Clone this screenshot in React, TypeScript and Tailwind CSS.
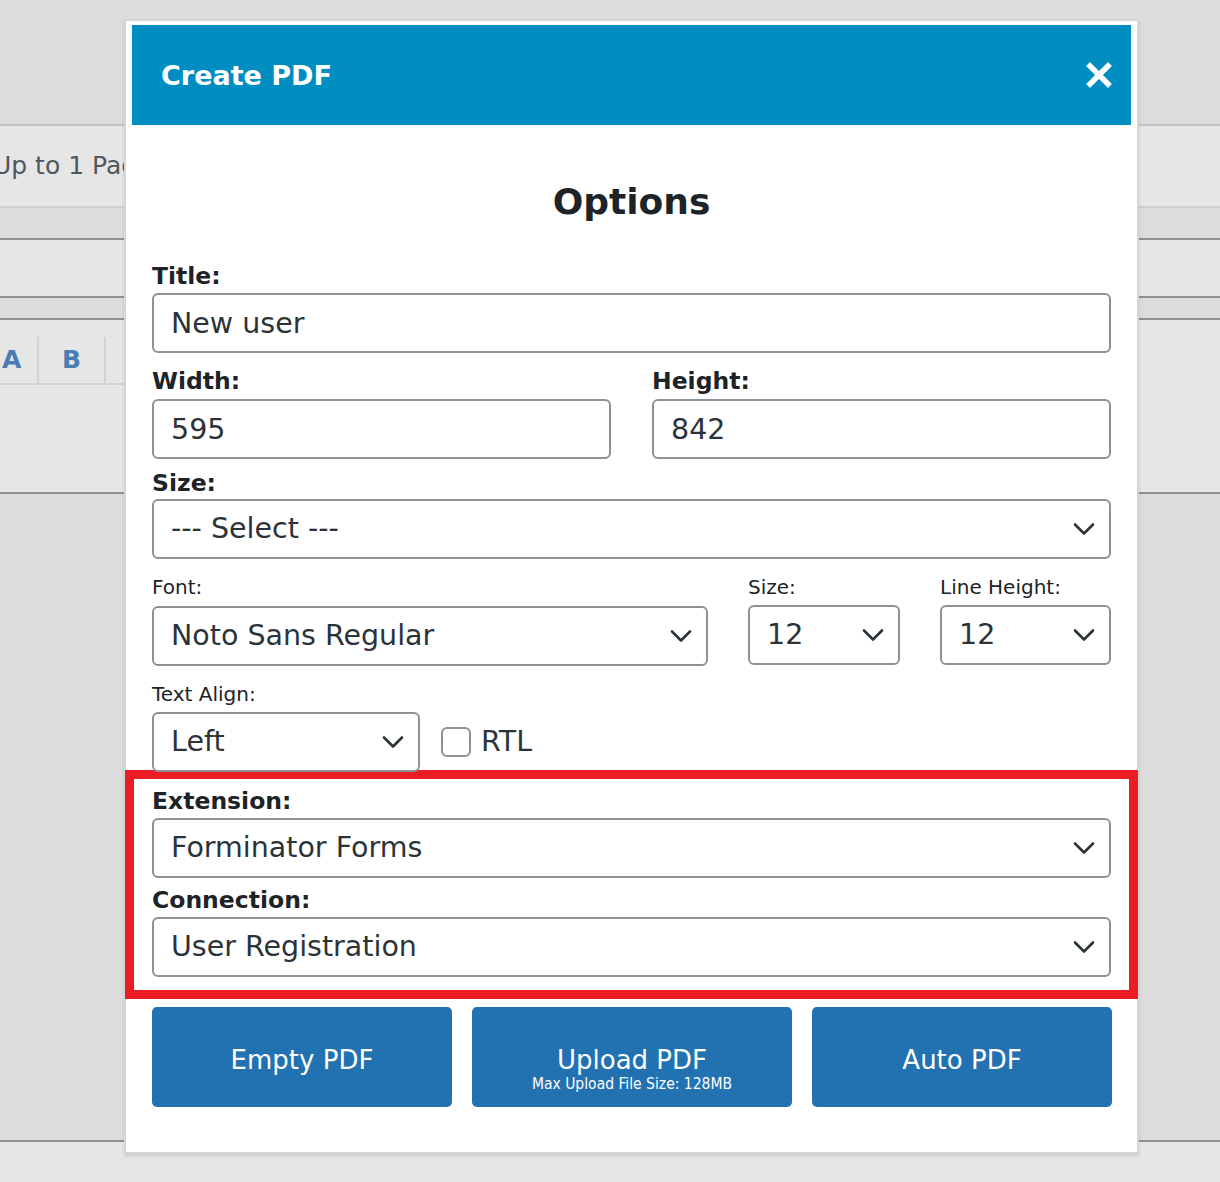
import React from 'react';

const labelBold = 'block text-[23.5px] font-bold leading-[28px] text-[#1d2327]';
const labelSmall = 'block text-[20px] leading-[24px] text-[#1d2327]';
const field =
  'h-[60px] w-full rounded-[6px] border-2 border-[#8e9196] bg-white pl-[17px] text-[28.5px] text-[#2c3338] outline-none';
const blueButton =
  'flex h-[100px] shrink-0 flex-col items-center rounded-[5px] bg-[#2271b1] pt-[38px] text-white';

const Chevron: React.FC = () => (
  <svg
    width="22"
    height="13"
    viewBox="0 0 22 13"
    fill="none"
    className="pointer-events-none absolute right-[16px] top-1/2 -translate-y-1/2"
  >
    <path d="M2 2l9 9 9-9" stroke="#2c3338" strokeWidth="2.6" strokeLinecap="round" strokeLinejoin="round" />
  </svg>
);

const Select: React.FC<{ value: string; options: string[]; className?: string }> = ({ value, options, className = '' }) => (
  <div className={`relative ${className}`}>
    <select defaultValue={value} className={`${field} appearance-none pr-12`}>
      {options.map((o) => (
        <option key={o}>{o}</option>
      ))}
    </select>
    <Chevron />
  </div>
);

const CloseIcon: React.FC = () => (
  <svg width="26" height="26" viewBox="0 0 26 26" fill="none">
    <path d="M4 4l18 18M22 4L4 22" stroke="#fff" strokeWidth="5.5" strokeLinecap="square" />
  </svg>
);

const App: React.FC = () => {
  return (
    <div className="relative h-[1182px] w-full overflow-hidden font-['DejaVu_Sans',sans-serif]">
      {/* page behind the dialog */}
      <div className="flex h-full flex-col">
        <div className="h-[124px] bg-[#dcdcdc]" />
        <div className="flex h-[82px] items-center border-t-2 border-[#c3c4c7] bg-[#e6e6e6]">
          <span className="-ml-[7px] whitespace-nowrap text-[25px] text-[#50575e]">Up to 1 Page</span>
        </div>
        <div className="h-[32px] border-t-2 border-[#cfcfcf] bg-[#dcdcdc]" />
        <div className="h-[58px] border-t-2 border-[#8c8f94] bg-[#e6e6e6]" />
        <div className="h-[22px] border-t-2 border-[#8c8f94] bg-[#dcdcdc]" />
        <div className="h-[174px] border-t-2 border-[#8c8f94] bg-[#e6e6e6]">
          <div className="mt-[17px] flex h-[48px] w-[180px] border-b-2 border-[#d3d3d3]">
            <div className="flex w-[39px] items-center border-r-2 border-[#d3d3d3] pl-[2px] text-[25px] font-bold text-[#4a7db4]">
              A
            </div>
            <div className="flex w-[67px] items-center justify-center border-r-2 border-[#d3d3d3] text-[25px] font-bold text-[#4a7db4]">
              B
            </div>
            <div className="flex w-[67px] items-center justify-center text-[25px] font-bold text-[#4a7db4]">C</div>
          </div>
        </div>
        <div className="h-[648px] border-t-2 border-[#8c8f94] bg-[#dcdcdc]" />
        <div className="flex-1 border-t-2 border-[#8c8f94] bg-[#e6e6e6]" />
      </div>

      {/* Create PDF dialog */}
      <div className="absolute left-[124px] top-[19px] w-[1015px] border-2 border-[#d6d6d6] bg-white pb-[45px] shadow-[0_2px_3px_rgba(0,0,0,0.12)]">
        <div className="mx-[6px] mt-[4px] flex h-[100px] items-center justify-between bg-[#008ec2] pl-[29px] pr-[19px]">
          <h1 className="mt-[2px] text-[27px] font-bold text-white">Create PDF</h1>
          <CloseIcon />
        </div>

        <div className="px-[26px]">
          <h2 className="mt-[55px] text-center text-[36px] font-bold leading-[43px] text-[#1d2327]">Options</h2>

          <label className={`${labelBold} mt-[39px]`}>Title:</label>
          <input defaultValue="New user" className={`${field} mt-[3px]`} />

          <div className="mt-[14px] flex gap-[41px]">
            <div className="flex-1">
              <label className={labelBold}>Width:</label>
              <input defaultValue="595" className={`${field} mt-[4px]`} />
            </div>
            <div className="flex-1">
              <label className={labelBold}>Height:</label>
              <input defaultValue="842" className={`${field} mt-[4px]`} />
            </div>
          </div>

          <label className={`${labelBold} mt-[10px]`}>Size:</label>
          <Select value="--- Select ---" options={['--- Select ---', 'A4', 'Letter']} className="mt-[2px]" />

          <div className="mt-[16px] flex gap-[40px]">
            <div className="w-[556px]">
              <label className={labelSmall}>Font:</label>
              <Select value="Noto Sans Regular" options={['Noto Sans Regular']} className="mt-[7px]" />
            </div>
            <div className="w-[152px]">
              <label className={labelSmall}>Size:</label>
              <Select value="12" options={['10', '12', '14']} className="mt-[6px]" />
            </div>
            <div className="flex-1">
              <label className={labelSmall}>Line Height:</label>
              <Select value="12" options={['10', '12', '14']} className="mt-[6px]" />
            </div>
          </div>

          <label className={`${labelSmall} mt-[16px]`}>Text Align:</label>
          <div className="mt-[6px] flex items-center gap-[21px]">
            <Select value="Left" options={['Left', 'Center', 'Right']} className="w-[268px]" />
            <label className="flex items-center gap-[10px] text-[28.5px] text-[#2c3338]">
              <span className="h-[30px] w-[30px] rounded-[6px] border-2 border-[#8e9196] bg-white" />
              RTL
            </label>
          </div>

          {/* data source block */}
          <div className="-mx-[27px] -mt-[2px] border-[9px] border-[#ec1c24] px-[18px] pb-[13px] pt-[8px]">
            <label className={labelBold}>Extension:</label>
            <Select value="Forminator Forms" options={['Forminator Forms']} className="mt-[3px]" />
            <label className={`${labelBold} mt-[8px]`}>Connection:</label>
            <Select value="User Registration" options={['User Registration']} className="mt-[3px]" />
          </div>

          <div className="mt-[8px] flex gap-[20px]">
            <button className={`${blueButton} w-[300px]`}>
              <span className="text-[26px] leading-[30px]">Empty PDF</span>
            </button>
            <button className={`${blueButton} w-[320px]`}>
              <span className="text-[26px] leading-[30px]">Upload PDF</span>
              <span className="font-['DejaVu_Sans_Condensed','DejaVu_Sans',sans-serif] text-[15.5px] leading-[18px]">
                Max Upload File Size: 128MB
              </span>
            </button>
            <button className={`${blueButton} w-[300px]`}>
              <span className="text-[26px] leading-[30px]">Auto PDF</span>
            </button>
          </div>
        </div>
      </div>
    </div>
  );
};

export default App;
